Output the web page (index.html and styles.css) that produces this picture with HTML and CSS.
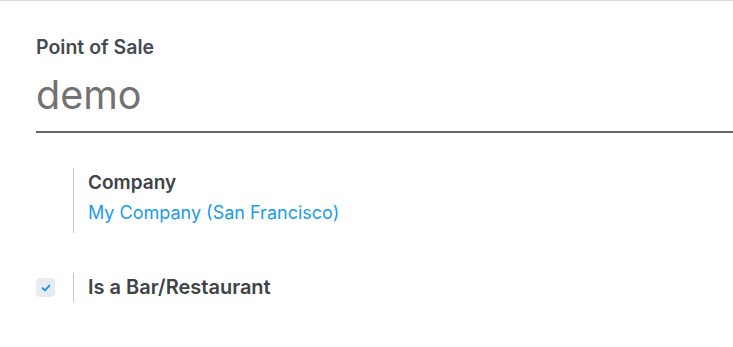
FILE: index.html
```html
<!DOCTYPE html>
<html>
<head>
<meta charset="utf-8">
<link rel="stylesheet" href="styles.css">
</head>
<body>
<div class="sheet">
  <div class="title-block">
    <div class="title-label">Point of Sale</div>
    <div class="title-input">demo</div>
  </div>
  <div class="field-row company-row">
    <div class="field-side"></div>
    <div class="field-body">
      <div class="field-label">Company</div>
      <a class="field-link" href="#">My Company (San Francisco)</a>
    </div>
  </div>
  <div class="field-row check-row">
    <div class="field-side">
      <span class="checkbox">
        <svg width="10" height="10" viewBox="0 0 10 10"><path d="M1.6 5.2 L4 7.4 L8.4 2.6" fill="none" stroke="#1a95e6" stroke-width="1.9" stroke-linecap="round" stroke-linejoin="round"/></svg>
      </span>
    </div>
    <div class="field-body">
      <div class="field-label big">Is a Bar/Restaurant</div>
    </div>
  </div>
</div>
</body>
</html>
```
FILE: styles.css
```css
html, body {
  margin: 0;
  padding: 0;
  background: #fff;
}
body {
  font-family: Inter, "Noto Sans", sans-serif;
  color: #454b52;
}
.sheet {
  border-top: 1px solid #d9dadc;
  padding: 34px 0 0 36px;
}
.title-label {
  font-size: 19.5px;
  font-weight: 600;
  line-height: 24px;
  color: #454b52;
}
.title-input {
  font-size: 39.5px;
  line-height: 48px;
  color: #727272;
  padding-top: 12px;
  padding-bottom: 12px;
  border-bottom: 2px solid #666;
}
.field-row {
  display: flex;
}
.company-row {
  margin-top: 35px;
}
.field-side {
  width: 37px;
  border-right: 1px solid #c9c9c9;
  display: flex;
  align-items: center;
}
.company-row .field-body {
  padding: 3px 0 8px 14px;
}
.field-body {
  padding-left: 14px;
}
.field-label {
  font-size: 19px;
  font-weight: 600;
  line-height: 24px;
  color: #3e4348;
  margin-bottom: 6px;
}
.field-label.big {
  font-size: 20px;
  line-height: 29px;
  margin-bottom: 0;
}
.field-link {
  display: block;
  font-size: 18px;
  line-height: 24px;
  color: #1a9cee;
  text-decoration: none;
}
.check-row {
  margin-top: 40px;
}
.checkbox {
  width: 19px;
  height: 19px;
  border-radius: 4px;
  background: #e8ebef;
  display: flex;
  align-items: center;
  justify-content: center;
}
```
